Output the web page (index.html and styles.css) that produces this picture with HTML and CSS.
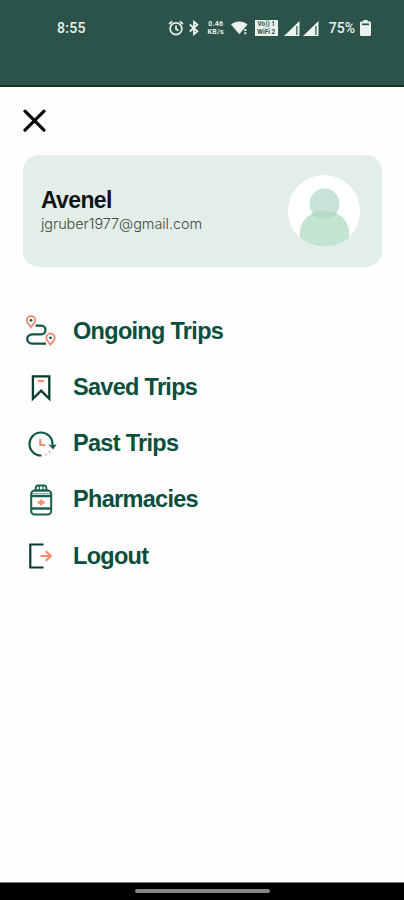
FILE: index.html
```html
<!DOCTYPE html>
<html lang="en">
<head>
  <meta charset="UTF-8">
  <meta name="viewport" content="width=device-width, initial-scale=1">
  <title>Menu</title>
  <link rel="stylesheet" href="styles.css">
</head>
<body>
  <div class="app">
    <header class="status-bar">
      <span class="time">8:55</span>
      <div class="status-icons">
        <svg class="alarm" width="16" height="16" viewBox="0 0 16 16" fill="none" stroke="currentColor" stroke-width="1.7">
          <circle cx="8" cy="8.8" r="5.9"/>
          <path d="M1 4L4.3 1.3M15 4L11.7 1.3M8 5.5V9l2.4 1.5"/>
        </svg>
        <svg class="bluetooth" width="10" height="16" viewBox="0 0 10 16" fill="none" stroke="currentColor" stroke-width="1.8">
          <path d="M.8 4.5L8.4 11.3 5 14.2V1.8L8.4 4.7.8 11.5"/>
        </svg>
        <div class="net-speed"><span>0.46</span><span>KB/s</span></div>
        <svg class="wifi" width="18" height="16" viewBox="0 0 18 16" fill="currentColor">
          <path d="M0 4.500C4.500.5 12 .5 16.500 4.500L8.300 14.300z"/>
          <path d="M13.300 9h2v2h-2zM13.300 12.200h2v2h-2z"/>
        </svg>
        <div class="volte"><span>Vo)) 1</span><span>WiFi 2</span></div>
        <svg class="signal" width="16" height="15" viewBox="0 0 16 15">
          <path d="M0 15L15.500 0v15z" fill="currentColor"/>
          <path d="M12.300 5v9h1.200V5z" fill="#2c5349"/>
        </svg>
        <svg class="signal" width="16" height="15" viewBox="0 0 16 15">
          <path d="M0 15L15.500 0v15z" fill="currentColor"/>
          <path d="M12.300 5v9h1.200V5z" fill="#2c5349"/>
        </svg>
        <span class="percent">75%</span>
        <svg class="battery" width="11" height="16" viewBox="0 0 11 16">
          <path d="M3.300 0h4.400v1.600h1.800Q11 1.600 11 3v11.500Q11 16 9.500 16h-8Q0 16 0 14.500V3q0-1.400 1.500-1.400h1.800z" fill="currentColor"/>
          <path d="M2 3.400h7v1.800H2z" fill="#2c5349"/>
        </svg>
      </div>
    </header>

    <main class="drawer">
      <button class="close" aria-label="Close">
        <svg width="24" height="24" viewBox="0 0 24 24" fill="none" stroke="#080b0b" stroke-width="3.2" stroke-linecap="round">
          <path d="M2 2.200l19 19M21 2.200l-19 19"/>
        </svg>
      </button>

      <section class="profile">
        <div class="profile-text">
          <div class="name">Avenel</div>
          <div class="email">jgruber1977@gmail.com</div>
        </div>
        <svg class="avatar" width="72" height="72" viewBox="0 0 72 72">
          <circle cx="36" cy="36" r="36" fill="#fff"/>
          <circle cx="36.500" cy="28.500" r="15" fill="#c7e2d7"/>
          <path d="M12 62.500C10 47 21 36 36.500 36S63 47 61 62.500C48 74.500 25 74.500 12 62.500z" fill="#c3e4d1"/>
          <path d="M23.600 38.500C31 35.200 42 35.200 49.400 38.500 44 45.400 29 45.400 23.600 38.500z" fill="#b6dbc8"/>
        </svg>
      </section>

      <nav class="menu">
        <a class="menu-item">
          <svg width="32" height="32" viewBox="0 0 32 32" fill="none" stroke-width="2.300">
            <path d="M10.500 10.700H16c6 0 6 8.700 0 8.700H7.500c-7 0-7 9.300 0 9.300H21" stroke="#125746"/>
            <path d="M6 12C3.500 9.200 1.800 7.500 1.800 5.200a4.200 4.200 0 0 1 8.400 0C10.200 7.500 8.500 9.200 6 12z" stroke="#f58c70" stroke-width="1.900"/>
            <path d="M25.500 29.500c-2.500-2.800-4.200-4.500-4.200-6.800a4.200 4.200 0 0 1 8.400 0c0 2.300-1.700 4-4.200 6.800z" stroke="#f58c70" stroke-width="1.900"/>
            <circle cx="6" cy="5.300" r="1.400" fill="#125746"/>
            <circle cx="25.500" cy="22.800" r="1.400" fill="#125746"/>
          </svg>
          <span>Ongoing Trips</span>
        </a>
        <a class="menu-item">
          <svg width="32" height="32" viewBox="0 0 32 32" fill="none" stroke-width="2.300">
            <path d="M7.900 4.300h16.400v22.500l-8.200-8.200-8.200 8.200z" stroke="#0b3b30"/>
            <path d="M13 9h6.200" stroke="#f58c70" stroke-width="2"/>
          </svg>
          <span>Saved Trips</span>
        </a>
        <a class="menu-item">
          <svg width="32" height="32" viewBox="0 0 32 32" fill="none" stroke-width="2.200">
            <path d="M16.500 27.500A11.500 11.500 0 1 1 27.500 16v2" stroke="#125746"/>
            <path d="M23.300 16.200l4.200 1.200 4.200-1.200-3.500 5.300z" fill="#125746"/>
            <path d="M15.300 11v6h5" stroke="#f58c70"/>
            <path d="M20 26.900l1.700-.7M23.800 24.700l1.400-1.200" stroke="#f5b3a3" stroke-width="1.800"/>
          </svg>
          <span>Past Trips</span>
        </a>
        <a class="menu-item">
          <svg width="32" height="32" viewBox="0 0 32 32" fill="none" stroke="#1a5f4e" stroke-width="2">
            <path d="M10.500 6.500l.6-3.800Q11.500 1.500 12.500 1.500h7.200q1 0 1.400 1.200l.6 3.800z"/>
            <path d="M14.300 2v4M18 2v4" stroke-width="1.200"/>
            <rect x="6.200" y="6.500" width="20" height="24" rx="3.500"/>
            <path d="M6.200 12H26.200M6.200 24.500H26.200" stroke-width="2.300"/>
            <path d="M6.200 9.500H26.200" stroke-width="1" stroke-opacity=".5"/>
            <path d="M16.200 15.500v6M12.700 18.500h7" stroke="#f58c70" stroke-width="2.400"/>
          </svg>
          <span>Pharmacies</span>
        </a>
        <a class="menu-item">
          <svg width="32" height="32" viewBox="0 0 32 32" fill="none" stroke-width="2.200">
            <path d="M18.500 4.500H5.300v23h13.200" stroke="#0b3b30"/>
            <path d="M15.500 16h10.500M20.800 11.200l4.900 4.800-4.900 4.800" stroke="#f58c70"/>
          </svg>
          <span>Logout</span>
        </a>
      </nav>
    </main>

    <footer class="nav-bar"><div class="handle"></div></footer>
  </div>
</body>
</html>
```
FILE: styles.css
```css
* {
  box-sizing: border-box;
}

body {
  margin: 0;
  font-family: "Liberation Sans", Arial, sans-serif;
  background: #fefefe;
}

.app {
  display: flex;
  flex-direction: column;
  height: 900px;
  overflow: hidden;
}

.status-bar {
  display: flex;
  justify-content: space-between;
  align-items: flex-start;
  height: 87px;
  padding: 20px 33px 0 57px;
  background: #2c5349;
  border-bottom: 2px solid #15341c;
  color: #e9f2ef;
  font-family: Roboto, sans-serif;
  font-size: 14px;
  font-weight: 500;
  line-height: 17px;
}

.time {
  letter-spacing: 0.3px;
}

.status-icons {
  display: flex;
  align-items: center;
  height: 16px;
}

.bluetooth {
  margin-left: 5px;
}

.net-speed {
  display: flex;
  flex-direction: column;
  width: 20px;
  margin-left: 7px;
  font-size: 7px;
  font-weight: 700;
  line-height: 8px;
  letter-spacing: 0.3px;
  text-align: center;
}

.wifi {
  margin-left: 5px;
}

.volte {
  display: flex;
  flex-direction: column;
  width: 23px;
  height: 16px;
  margin-left: 6px;
  background: #e9f2ef;
  color: #2c5349;
  font-size: 6.5px;
  font-weight: 700;
  line-height: 8px;
  text-align: center;
}

.signal {
  margin-left: 3px;
}

.volte + .signal {
  margin-left: 6px;
}

.percent {
  margin-left: 10px;
}

.battery {
  margin-left: 5px;
}

.drawer {
  flex: 1;
  padding: 22px 22px 0 23px;
}

.close {
  display: block;
  padding: 0;
  border: none;
  background: none;
}

.close svg {
  display: block;
}

.profile {
  display: flex;
  justify-content: space-between;
  align-items: center;
  height: 112px;
  margin-top: 22px;
  padding: 0 22px 0 18px;
  border-radius: 16px;
  background: #e4eee9;
}

.name {
  color: #101414;
  font-size: 23px;
  font-weight: 700;
  letter-spacing: -0.65px;
  line-height: 26px;
}

.email {
  color: #414a47;
  font-family: Inter, sans-serif;
  font-size: 14.5px;
  font-weight: 300;
  letter-spacing: -0.07px;
  line-height: 22px;
}

.menu {
  display: flex;
  flex-direction: column;
  gap: 24.2px;
  margin-top: 48.4px;
  padding-left: 2px;
}

.menu-item {
  display: flex;
  align-items: center;
  gap: 16px;
  height: 32px;
  color: #0a4e3d;
  font-size: 23.5px;
  font-weight: 700;
  letter-spacing: -0.7px;
}

.nav-bar {
  display: flex;
  justify-content: center;
  height: 18px;
  padding-top: 6px;
  border-top: 1px solid #777;
  background: #000;
}

.handle {
  width: 135px;
  height: 4px;
  border-radius: 2px;
  background: #858585;
}
```
